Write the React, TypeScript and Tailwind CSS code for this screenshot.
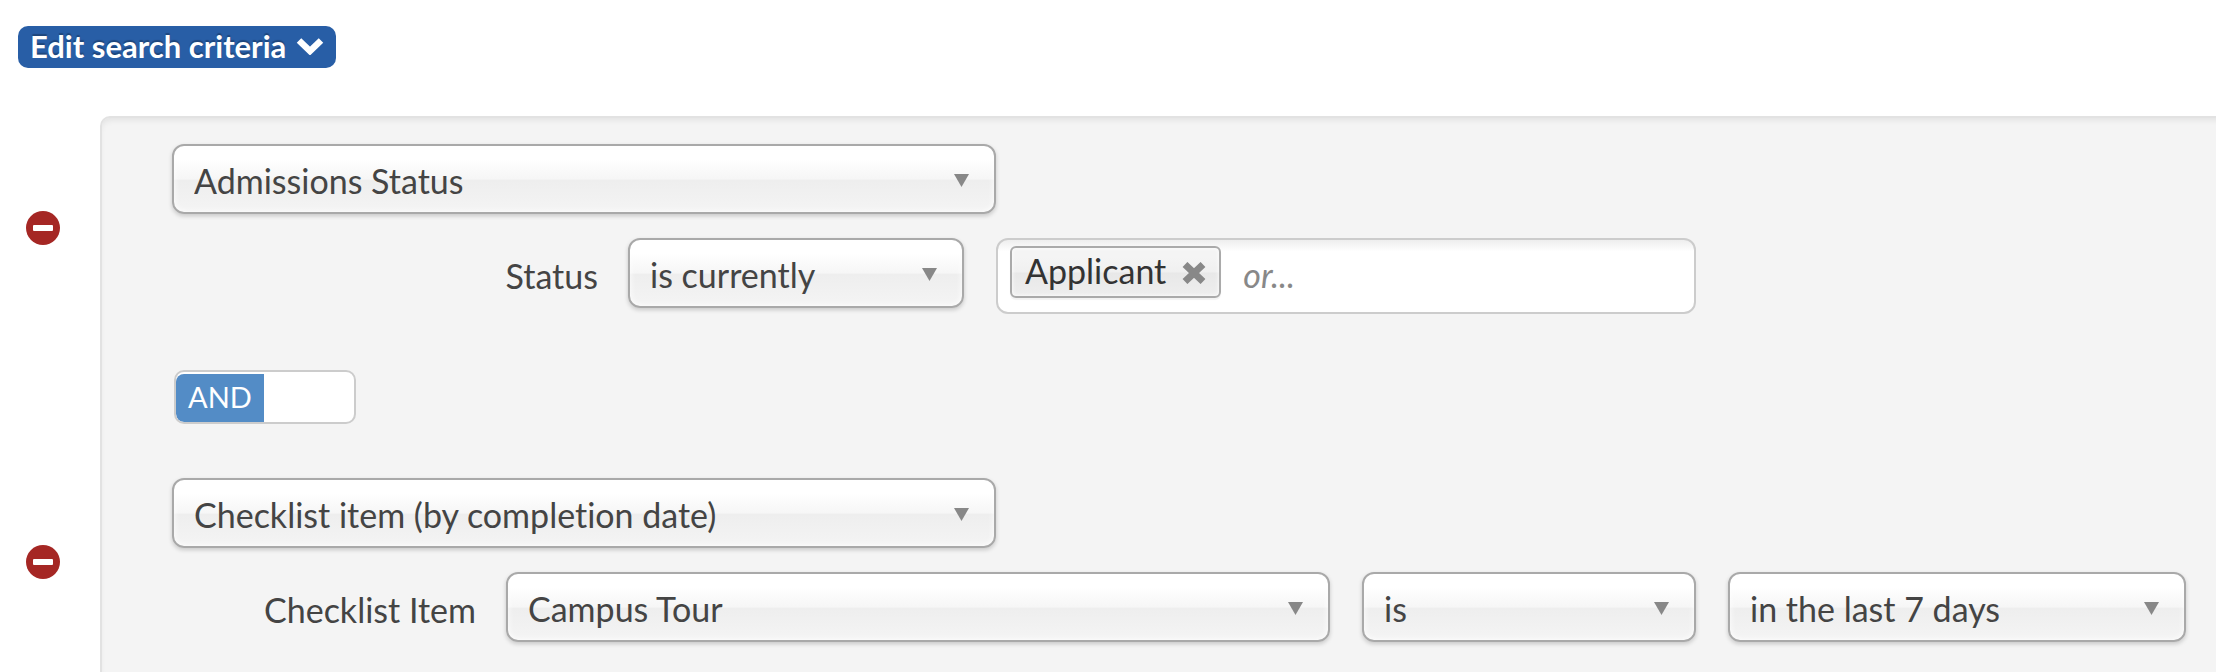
import React, { useState } from "react";

type SelectBoxProps = {
  label: string;
  options: string[];
  className: string;
  id?: string;
};

/**
 * A native select with the glossy two-tone face and a small triangle on the right.
 */
const SelectBox = ({ label, options, className, id }: SelectBoxProps) => {
  const [value, setValue] = useState(options[0]);

  return (
    <div className={`relative shrink-0 ${className}`}>
      <select
        id={id}
        aria-label={label}
        value={value}
        onChange={(e) => setValue(e.target.value)}
        className="block h-[70px] w-full appearance-none rounded-xl border-2 border-[#a9a9a9] bg-[linear-gradient(to_bottom,#ffffff_20%,#f6f6f6_50%,#eeeeee_52%,#f4f4f4_100%)] pl-5 pr-14 pt-0.5 text-[34px] text-[#444444] shadow-[0_2px_4px_rgba(0,0,0,0.18),inset_0_0_6px_#ffffff]"
      >
        {options.map((option) => (
          <option key={option}>{option}</option>
        ))}
      </select>
      <svg
        viewBox="0 0 15 13"
        className="pointer-events-none absolute right-[27px] top-[30px] h-[13px] w-[15px] fill-[#888888]"
        aria-hidden="true"
      >
        <path d="M0 0h15L7.500 13z" />
      </svg>
    </div>
  );
};

const RemoveButton = ({ label }: { label: string }) => (
  <div className="flex h-[170px] items-center">
    <button type="button" aria-label={label} className="cursor-pointer">
      <svg viewBox="0 0 34 34" className="size-[34px]" aria-hidden="true">
        <circle cx="17" cy="17" r="17" fill="#a52724" />
        <rect x="7" y="14" width="20" height="6" rx="1" fill="#ffffff" />
      </svg>
    </button>
  </div>
);

const StatusTokens = () => {
  const [tokens, setTokens] = useState(["Applicant"]);

  return (
    <div className="flex h-[76px] w-[700px] shrink-0 items-start gap-[22px] rounded-xl border-2 border-[#cccccc] bg-[linear-gradient(to_bottom,#eeeeee,#ffffff_16%)] px-3 pt-1.5">
      {tokens.map((token) => (
        <span
          key={token}
          className="flex h-[52px] shrink-0 items-center gap-4 rounded-md border-2 border-[#aaaaaa] bg-[linear-gradient(to_bottom,#f4f4f4_20%,#f0f0f0_50%,#e8e8e8_52%,#eeeeee_100%)] px-[13px] pb-0.5 text-[34px] leading-none text-[#333333] shadow-[0_2px_1px_rgba(0,0,0,0.05),inset_0_0_4px_#ffffff]"
        >
          {token}
          <button
            type="button"
            aria-label={`Remove ${token}`}
            onClick={() => setTokens(tokens.filter((t) => t !== token))}
            className="cursor-pointer"
          >
            <svg viewBox="0 0 24 22" className="mt-1 h-[22px] w-6" aria-hidden="true">
              <path
                d="M3 2.500L21 19.500M21 2.500L3 19.500"
                stroke="#888888"
                strokeWidth="7"
                fill="none"
              />
            </svg>
          </button>
        </span>
      ))}
      <input
        type="text"
        aria-label="Add another status"
        placeholder="or..."
        className="h-14 min-w-0 flex-1 bg-transparent text-[34px] italic text-[#444444] outline-none placeholder:text-[#888888]"
      />
    </div>
  );
};

const App = () => {
  const [isAnd, setIsAnd] = useState(true);

  return (
    <div className="flex min-h-screen flex-col overflow-hidden bg-white font-['Lato','Liberation_Sans',sans-serif] text-[#444444] [font-variant-ligatures:none]">
      {/* Header */}
      <div className="px-[18px] pb-12 pt-[26px]">
        <button
          type="button"
          className="flex h-[42px] cursor-pointer items-center gap-2.5 rounded-[10px] bg-[#285ea6] px-3 pb-0.5 text-[31px] font-bold leading-none text-white [text-shadow:0_-2px_1px_rgba(0,0,0,0.25)]"
        >
          Edit search criteria
          <svg viewBox="0 0 28 18" className="h-[18px] w-7" aria-hidden="true">
            <path
              d="M3 3.500L14 14L25 3.500"
              stroke="#ffffff"
              strokeWidth="6.500"
              fill="none"
            />
          </svg>
        </button>
      </div>

      <div className="flex flex-1">
        {/* Remove buttons */}
        <div className="flex w-[100px] shrink-0 flex-col gap-[164px] pl-[26px] pt-[27px]">
          <RemoveButton label="Remove admissions status" />
          <RemoveButton label="Remove checklist item" />
        </div>

        {/* Criteria */}
        <div className="-mr-3 flex-1 rounded-tl-[10px] border-l-2 border-t-2 border-[#e2e2e2] bg-[#f4f4f4] pl-[70px] pt-[26px] shadow-[inset_0_4px_6px_-2px_rgba(0,0,0,0.08)]">
          <SelectBox
            label="Criterion"
            options={["Admissions Status", "Checklist item (by completion date)"]}
            className="w-[824px]"
          />
          <div className="mt-6 flex items-start gap-8">
            <div className="flex shrink-0 gap-[30px]">
              <label
                htmlFor="status"
                className="w-[426px] text-right text-[34px] leading-[76px]"
              >
                Status
              </label>
              <SelectBox
                id="status"
                label="Status"
                options={["is currently", "was ever"]}
                className="w-[336px]"
              />
            </div>
            <StatusTokens />
          </div>

          <button
            type="button"
            aria-pressed={isAnd}
            onClick={() => setIsAnd(!isAnd)}
            className={`ml-0.5 mt-14 flex h-[54px] w-[182px] cursor-pointer overflow-hidden rounded-[10px] border-2 border-[#cccccc] bg-white pt-0.5 text-[29px] text-white ${
              isAnd ? "justify-start" : "justify-end"
            }`}
          >
            <span className="flex h-full w-[88px] items-center justify-center rounded-l-lg bg-[#538cc6] pb-0.5">
              {isAnd ? "AND" : "OR"}
            </span>
          </button>

          <SelectBox
            label="Criterion"
            options={["Checklist item (by completion date)", "Admissions Status"]}
            className="mt-[54px] w-[824px]"
          />
          <div className="mt-6 flex items-start gap-8">
            <div className="flex shrink-0 gap-[30px]">
              <label
                htmlFor="checklist-item"
                className="w-[304px] text-right text-[34px] leading-[76px]"
              >
                Checklist Item
              </label>
              <SelectBox
                id="checklist-item"
                label="Checklist Item"
                options={["Campus Tour", "Interview"]}
                className="w-[824px]"
              />
            </div>
            <SelectBox
              label="Comparison"
              options={["is", "is not"]}
              className="w-[334px]"
            />
            <SelectBox
              label="Date range"
              options={["in the last 7 days", "in the last 30 days"]}
              className="w-[458px]"
            />
          </div>
        </div>
      </div>
    </div>
  );
};

export default App;
